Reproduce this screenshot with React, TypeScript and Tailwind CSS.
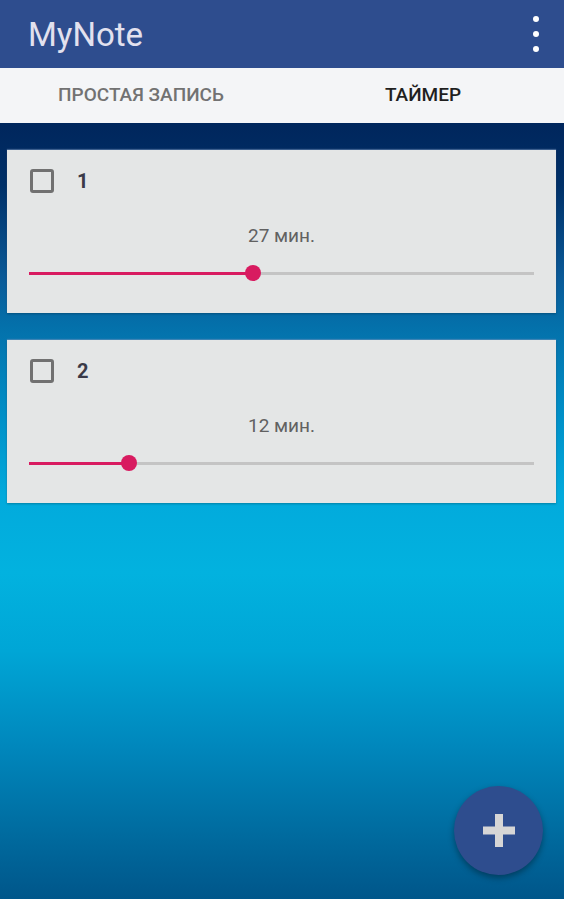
import React from "react";

function Card({ n, minutes, thumbX }: { n: string; minutes: string; thumbX: number }) {
  return (
    <div className="h-[163px] bg-[#e4e6e6] shadow-[0_-1px_1px_rgba(120,150,190,0.5),0_1px_2px_rgba(0,0,0,0.25)] flex flex-col px-[22px]">
      <div className="mt-[19px] flex items-center h-[24px]">
        <div className="ml-[1px] w-[24px] h-[24px] border-[3px] border-[#717171] rounded-[3px]" />
        <span className="ml-[23px] text-[20px] leading-[24px] font-bold text-[#3a3a48]">{n}</span>
      </div>
      <div className="mt-[31px] h-[24px] leading-[24px] text-center text-[19px] text-[#616161]">
        {minutes}
      </div>
      <div className="mt-[17px] relative h-[16px] flex items-center">
        <div className="h-[3px] bg-[#d81b60]" style={{ width: thumbX }} />
        <div className="h-[3px] flex-1 bg-[#c4c4c4]" />
        <div
          className="absolute top-0 w-[16px] h-[16px] rounded-full bg-[#d81b60]"
          style={{ left: thumbX - 8 }}
        />
      </div>
    </div>
  );
}

export default function App() {
  return (
    <div
      className="relative w-[564px] h-[899px] overflow-hidden flex flex-col"
      style={{ fontFamily: "Roboto, 'Noto Sans', sans-serif" }}
    >
      <div className="h-[68px] shrink-0 bg-[#2e4d8e] flex items-center justify-between pl-[28px] pr-[25px]">
        <span className="text-[33px] leading-none text-[#e2e1ee]">MyNote</span>
        <div className="flex flex-col gap-[9px] items-center">
          <div className="w-[6px] h-[6px] rounded-full bg-white" />
          <div className="w-[6px] h-[6px] rounded-full bg-white" />
          <div className="w-[6px] h-[6px] rounded-full bg-white" />
        </div>
      </div>
      <div className="h-[55px] shrink-0 bg-[#f4f5f7] flex">
        <div className="flex-1 flex items-center justify-center text-[19px] font-medium text-[#727272]">
          ПРОСТАЯ ЗАПИСЬ
        </div>
        <div className="flex-1 flex items-center justify-center text-[19px] font-medium text-[#1f1f1f]">
          ТАЙМЕР
        </div>
      </div>
      <div className="flex-1 bg-[linear-gradient(180deg,#00265c_0%,#003068_8%,#0a5a98_20%,#0470aa_26%,#0090c8_38%,#02aadc_48%,#02b2df_58%,#00a6d6_68%,#0088bd_80%,#006fa3_90%,#00568a_100%)] pl-[7px] pr-[8px] pt-[27px] flex flex-col gap-[27px]">
        <Card n="1" minutes="27 мин." thumbX={224} />
        <Card n="2" minutes="12 мин." thumbX={100} />
      </div>
      <div className="absolute right-[21px] bottom-[24px] w-[89px] h-[89px] rounded-full bg-[#2e4d8e] shadow-[0_3px_6px_rgba(0,0,0,0.35)] flex items-center justify-center">
        <svg width="32" height="33" viewBox="0 0 32 33">
          <rect x="12" y="0" width="8" height="33" fill="#d6d6d6" />
          <rect x="0" y="12.5" width="32" height="8" fill="#d6d6d6" />
        </svg>
      </div>
    </div>
  );
}
